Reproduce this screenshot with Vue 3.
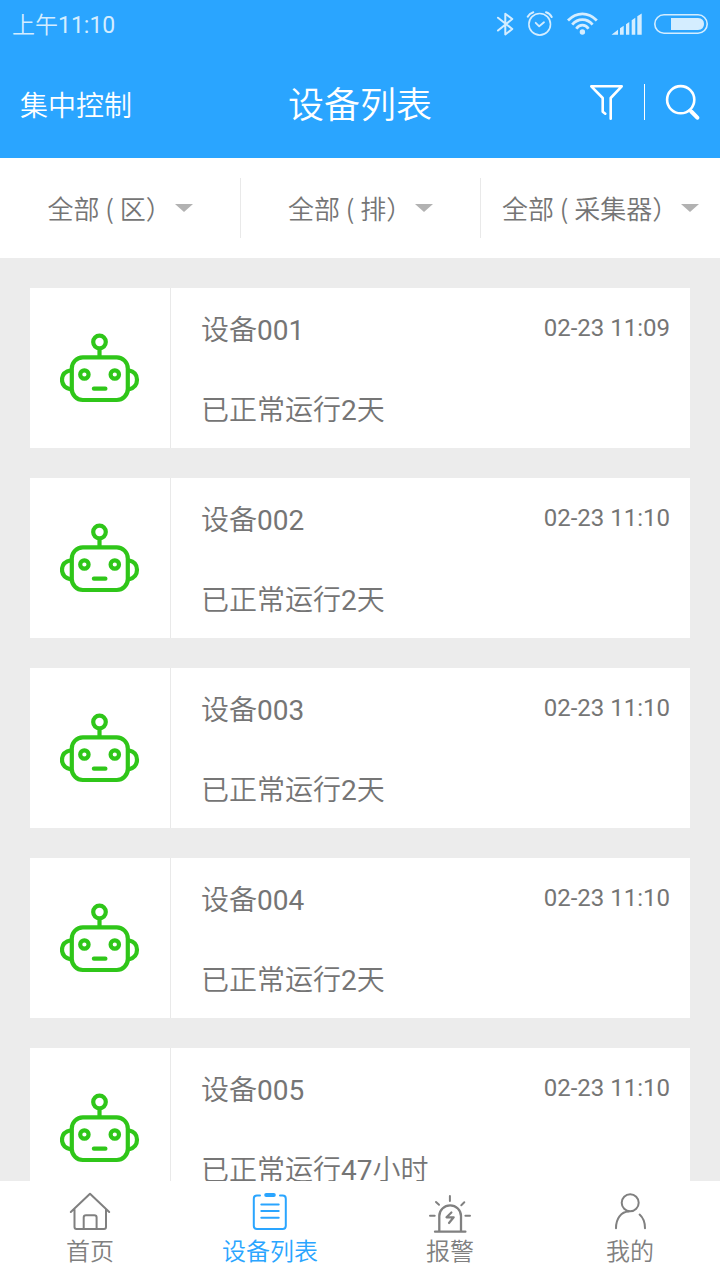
<script setup>
import { ref } from 'vue'

const filters = [
  { name: '区', text: '全部 ( 区）' },
  { name: '排', text: '全部 ( 排）' },
  { name: '采集器', text: '全部 ( 采集器）' },
]

const devices = [
  { no: '001', time: '02-23 11:09', amount: 2, unit: '天' },
  { no: '002', time: '02-23 11:10', amount: 2, unit: '天' },
  { no: '003', time: '02-23 11:10', amount: 2, unit: '天' },
  { no: '004', time: '02-23 11:10', amount: 2, unit: '天' },
  { no: '005', time: '02-23 11:10', amount: 47, unit: '小时' },
]

const tabs = [
  { id: 'home', label: '首页' },
  { id: 'devices', label: '设备列表' },
  { id: 'alarm', label: '报警' },
  { id: 'mine', label: '我的' },
]
const active = ref('devices')
</script>

<template>
  <div class="screen">
    <div class="top">
      <div class="status">
        <span class="clock">上午<span class="num">11:10</span></span>
        <div class="indicators">
          <svg width="18" height="28" viewBox="0 0 18 28" class="line" stroke-width="2">
            <path d="M2 6.7 16.3 18 9.3 23.5V2.7L16.3 8 2 19.5" />
          </svg>
          <svg width="29" height="28" viewBox="0 0 29 28" class="line" stroke-width="1.6">
            <circle cx="13.7" cy="13.3" r="10.8" />
            <path d="M9.7 11.8 13.2 15.3 18 11.3" stroke-width="1.8" />
            <path d="M1.7 5.7Q3.4 2.5 7.3 1.3M20 1.3Q24 2.5 25.7 6" stroke-width="2" />
          </svg>
          <svg width="32" height="28" viewBox="0 0 32 28" class="line wifi" stroke-width="2.8">
            <path d="M1 9.4Q7.5 2.8 15.4 2.8T29.8 9.4M5.2 13.7Q9.5 8.7 15.4 8.7T25.6 13.7M9.3 17.7Q11.8 14.2 15.4 14.2T21.5 17.7" />
            <circle cx="15.4" cy="21" r="2.7" class="solid" />
          </svg>
          <svg width="31" height="28" viewBox="0 0 31 28" class="solid">
            <path d="M.5 23.7 7 18.7V23.7ZM9 17.3 12.7 14.8V23.7H9ZM15 13.2 18.3 10.9V23.7H15ZM20.7 9.2 24.3 6.7V23.7H20.7ZM26.3 5.3 30.7 2.5V23.7H26.3Z" />
          </svg>
          <svg width="54" height="28" viewBox="0 0 54 28" class="line" stroke-width="1.6">
            <rect x="0.8" y="3.8" width="52.4" height="18.4" rx="9.2" />
            <path d="M17 7H44Q50 7.5 50 13T44 19H17Z" class="solid" />
          </svg>
        </div>
      </div>
      <header class="bar">
        <button type="button" class="control">集中控制</button>
        <h1>设备列表</h1>
        <div class="tools">
          <button type="button" aria-label="筛选">
            <svg width="36" height="40" viewBox="0 0 36 40" class="tool" stroke-width="2.6">
              <path d="M17.3 29.7 14.7 27.7V14L3.3 2.3H33.7L22.7 14V34.7" />
            </svg>
          </button>
          <span class="rule"></span>
          <button type="button" aria-label="搜索">
            <svg width="35" height="40" viewBox="0 0 35 40" class="tool" stroke-width="2.6">
              <circle cx="15.7" cy="15.7" r="13.6" />
              <path d="M25 26 26.5 28" />
              <path d="M26.3 27.5 32.3 33.7" stroke-width="4" />
            </svg>
          </button>
        </div>
      </header>
    </div>

    <div class="filters">
      <div v-for="f in filters" :key="f.name" class="cell">
        <div class="picker">
          <select :aria-label="f.name">
            <option>{{ f.text }}</option>
          </select>
          <svg width="18" height="8" viewBox="0 0 18 8" class="caret"><path d="M0 0H18L9 8Z" /></svg>
        </div>
      </div>
    </div>

    <main class="list">
      <article v-for="d in devices" :key="d.no" class="card">
        <div class="avatar">
          <svg width="80" height="70" viewBox="0 0 80 70" class="robot">
            <circle cx="39.5" cy="9" r="6.3" />
            <path d="M39.5 15V24" />
            <rect x="11.8" y="24.4" width="56" height="42.6" rx="11" />
            <path d="M11 37.3Q2 39 2 46.7T11 56.5M68.5 37.3Q77 39 77 46.7T68.5 56.5" />
            <circle cx="24.4" cy="41.5" r="4.2" />
            <circle cx="54.8" cy="41.5" r="4.2" />
            <path d="M33.9 55.7H45.4" stroke-linecap="round" />
          </svg>
        </div>
        <div class="info">
          <div class="row">
            <h2>设备<span class="num">{{ d.no }}</span></h2>
            <time class="num">{{ d.time }}</time>
          </div>
          <div class="row">
            <p>已正常运行<span class="num">{{ d.amount }}</span>{{ d.unit }}</p>
          </div>
        </div>
      </article>
    </main>

    <nav class="tabs">
      <a
        v-for="t in tabs"
        :key="t.id"
        href="#"
        :class="{ active: active === t.id }"
        @click.prevent="active = t.id"
      >
        <svg width="44" height="44" viewBox="0 0 44 44" class="glyph">
          <template v-if="t.id === 'home'">
            <path d="M2.8 22 22 3.8 41.2 22M6.5 19.5V37Q6.5 39 8.5 39H36Q38 39 38 37V19.5" />
            <path d="M15.7 39V27.5Q15.7 25.2 18 25.2H26.3Q28.6 25.2 28.6 27.5V39" />
          </template>
          <template v-else-if="t.id === 'devices'">
            <path d="M12 5.5H9Q5.8 5.5 5.8 8.7V35.8Q5.8 39 9 39H34.6Q37.8 39 37.8 35.8V8.7Q37.8 5.5 34.6 5.5H32" />
            <path d="M18.2 5H25.8" stroke-width="4" />
            <path d="M13.3 14.4H30.7M13.3 21H30.7M13.3 27.7H30.7" />
          </template>
          <template v-else-if="t.id === 'alarm'">
            <path d="M7 41.7H37.4M11.3 41V26A10.85 10.6 0 0 1 33 26V41" stroke-width="2.3" />
            <path d="M21.9 6V11M8 12 11 14.8M36.3 12.3 33.3 15.2M2 25.7H6.7M37.4 25.7H42" />
            <path d="M23.4 22.5 18.5 27.3H25.7L21 33" stroke-width="2.2" />
          </template>
          <template v-else>
            <circle cx="22.2" cy="12.8" r="8.5" />
            <path d="M8 38.2C8 28.5 13 21.8 20.8 21.6M31.6 24.6Q36.9 29.2 37 38.2" />
          </template>
        </svg>
        <span>{{ t.label }}</span>
      </a>
    </nav>
  </div>
</template>

<style>
body {
  margin: 0;
}
</style>

<style scoped>
.screen {
  display: flex;
  flex-direction: column;
  height: 100vh;
  background: #ececec;
  color: #757575;
  font-family: Roboto, "Noto Sans CJK SC", sans-serif;
  font-weight: 350;
  overflow: hidden;
}
button {
  padding: 0;
  border: 0;
  background: none;
  color: inherit;
  font: inherit;
  cursor: pointer;
}
svg {
  display: block;
}
h1,
h2,
p {
  margin: 0;
  font-weight: inherit;
}
.num {
  font-weight: 400;
}
.top {
  flex: none;
  background: #2aa5ff;
  color: #fff;
}
.status {
  display: flex;
  justify-content: space-between;
  height: 50px;
  padding: 0 12px;
}
.clock {
  font-size: 23px;
  line-height: 52px;
  color: #d4edff;
}
.indicators {
  display: flex;
  align-items: center;
  gap: 12px;
}
.line {
  fill: none;
  stroke: #d4edff;
  stroke-linejoin: round;
  stroke-linecap: round;
}
.wifi {
  stroke-linecap: butt;
}
.solid {
  fill: #d4edff;
  stroke: none;
}
.bar {
  display: grid;
  grid-template-columns: 1fr auto 1fr;
  align-items: center;
  height: 108px;
  padding: 0 20px;
}
.control {
  justify-self: start;
  font-size: 28px;
}
.bar h1 {
  padding-bottom: 4px;
  font-size: 36px;
}
.tools {
  display: flex;
  gap: 20px;
  justify-self: end;
}
.rule {
  width: 1px;
  height: 36px;
  background: #fff;
}
.tool {
  fill: none;
  stroke: #fff;
  stroke-linecap: round;
  stroke-linejoin: round;
}
.filters {
  flex: none;
  display: grid;
  grid-template-columns: repeat(3, 1fr);
  align-items: center;
  height: 100px;
  background: #fff;
}
.cell {
  display: flex;
  align-items: center;
  justify-content: center;
  height: 60px;
}
.cell + .cell {
  border-left: 1px solid #e9e9e9;
}
.picker {
  position: relative;
}
.picker select {
  display: block;
  appearance: none;
  margin: 0;
  padding: 0 20px 0 0;
  border: 0;
  background: none;
  color: inherit;
  font-family: "Noto Sans CJK SC", sans-serif;
  font-size: 26px;
  font-weight: inherit;
  line-height: 40px;
}
.caret {
  position: absolute;
  right: 0;
  top: 16px;
  fill: #b2b2b2;
  pointer-events: none;
}
.list {
  flex: 1;
  min-height: 0;
  display: flex;
  flex-direction: column;
  gap: 30px;
  padding: 30px;
  overflow-y: auto;
  scrollbar-width: none;
}
.card {
  flex: none;
  display: flex;
  background: #fff;
}
.avatar {
  display: flex;
  align-items: center;
  justify-content: center;
  width: 140px;
  border-right: 1px solid #e9e9e9;
}
.robot {
  fill: none;
  stroke: #2fc619;
  stroke-width: 4.2;
}
.info {
  flex: 1;
  padding: 0 20px 0 30px;
}
.row {
  display: flex;
  align-items: center;
  justify-content: space-between;
  height: 80px;
  font-size: 28px;
}
.row h2 {
  font-size: 28px;
}
.row time {
  font-size: 24px;
}
.tabs {
  flex: none;
  display: grid;
  grid-template-columns: repeat(4, 1fr);
  background: #fff;
}
.tabs a {
  display: flex;
  flex-direction: column;
  align-items: center;
  gap: 2px;
  padding: 9px 0 12px;
  color: #808080;
  font-size: 24px;
  line-height: 32px;
  text-decoration: none;
}
.tabs a.active {
  color: #2aa5ff;
}
.glyph {
  fill: none;
  stroke: currentColor;
  stroke-width: 2;
  stroke-linecap: round;
  stroke-linejoin: round;
}
</style>
